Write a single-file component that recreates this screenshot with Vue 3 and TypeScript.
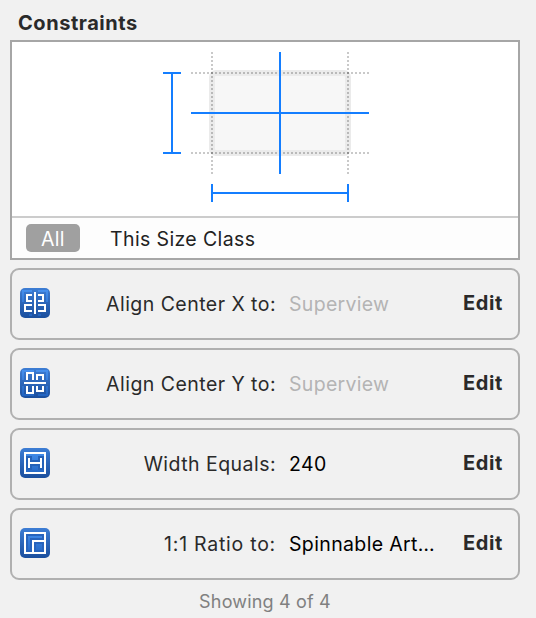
<script setup lang="ts">
interface Constraint {
  kind: 'centerX' | 'centerY' | 'width' | 'ratio'
  label: string
  value: string
  placeholder: boolean
}

const constraints: Constraint[] = [
  { kind: 'centerX', label: 'Align Center X to:', value: 'Superview', placeholder: true },
  { kind: 'centerY', label: 'Align Center Y to:', value: 'Superview', placeholder: true },
  { kind: 'width', label: 'Width Equals:', value: '240', placeholder: false },
  { kind: 'ratio', label: '1:1 Ratio to:', value: 'Spinnable Art…', placeholder: false },
]
</script>

<template>
  <main class="inspector">
    <h1 class="title">Constraints</h1>
    <section class="overview">
      <svg class="diagram" viewBox="12 42 506 174" width="506" height="174" shape-rendering="crispEdges">
        <rect x="212" y="73" width="136" height="80" rx="2" fill="#f7f7f7" />
        <rect x="212" y="73" width="136" height="80" rx="4" fill="none" stroke="#ebebeb" stroke-width="6" shape-rendering="auto" />
        <g stroke="#000" stroke-opacity=".21" stroke-width="2" stroke-dasharray="2 2">
          <path d="M191 73H369" /><path d="M191 153H369" />
          <path d="M212 52V174" /><path d="M348 52V174" />
        </g>
        <path d="M280 52V174M191 113H369M163 73H181M163 153H181M172 73V153M212 184V202M348 184V202M212 193H348" fill="none" stroke="#147eff" stroke-width="2" />
      </svg>
      <div class="scope">
        <button class="all">All</button>
        <span class="size-class">This Size Class</span>
      </div>
    </section>
    <ul class="list">
      <li v-for="c in constraints" :key="c.kind" class="card">
        <svg class="icon" viewBox="0 0 30 30" width="30" height="30">
          <defs>
            <linearGradient :id="'edge-' + c.kind" x1="0" y1="0" x2="0" y2="1">
              <stop offset="0" stop-color="#3d7dd4" />
              <stop offset="1" stop-color="#1b4f9e" />
            </linearGradient>
            <linearGradient :id="'face-' + c.kind" gradientUnits="userSpaceOnUse" x1="0" y1="2" x2="0" y2="28">
              <stop offset="0" stop-color="#4690ee" />
              <stop offset="1" stop-color="#2163c0" />
            </linearGradient>
          </defs>
          <rect width="30" height="30" rx="5" :fill="`url(#edge-${c.kind})`" />
          <g fill="none" stroke="#fff" stroke-width="2">
            <template v-if="c.kind === 'centerX'">
              <path d="M3 14V3H12M18 3H27V14M9 27H12M18 27H21" :stroke="`url(#face-${c.kind})`" />
              <path d="M15 4V26M12 7H7V13H12M18 7H23V13H18M12 17H5V23H12M18 17H25V23H18" />
            </template>
            <template v-else-if="c.kind === 'centerY'">
              <path d="M3 12V3H14M16 3H27V12M3 18V27H14M18 27H27V18" :stroke="`url(#face-${c.kind})`" />
              <path d="M4 15H26M7 12V5H13V12M17 12V7H23V12M7 18V25H13V18M17 18V23H23V18" />
            </template>
            <template v-else-if="c.kind === 'width'">
              <rect x="6" y="6" width="18" height="18" :fill="`url(#face-${c.kind})`" stroke="none" />
              <path d="M9 8V22M21 8V22M9 15H21" stroke="#2562b9" stroke-width="6" />
              <rect x="5" y="5" width="20" height="20" />
              <path d="M9 10V20M21 10V20M9 15H21" />
            </template>
            <template v-else>
              <rect x="6" y="6" width="18" height="18" fill="#2864bd" stroke="none" />
              <path d="M9 22V9H22" :stroke="`url(#face-${c.kind})`" />
              <rect x="5" y="5" width="20" height="20" />
              <path d="M13 24V13H24" />
              <rect x="16" y="16" width="6" height="6" :fill="`url(#face-${c.kind})`" stroke="none" />
            </template>
          </g>
        </svg>
        <span class="label" :class="c.kind">{{ c.label }}</span>
        <span class="value" :class="{ placeholder: c.placeholder }">{{ c.value }}</span>
        <button class="edit">Edit</button>
      </li>
    </ul>
    <footer class="footer">Showing 4 of 4</footer>
  </main>
</template>

<style>
body { margin: 0; background: #f1f1f1; }
</style>

<style scoped>
.inspector {
  box-sizing: border-box;
  width: 536px;
  height: 618px;
  padding: 0 16px 0 10px;
  background: #f1f1f1;
  font-family: Inter, "Noto Sans", sans-serif;
  font-size: 19.5px;
  line-height: 24px;
  color: #2a2a2a;
  overflow: hidden;
  white-space: nowrap;
}
button { border: 0; padding: 0; background: none; font: inherit; color: inherit; }
.title { margin: 0; height: 40px; padding: 11px 0 0 8px; box-sizing: border-box; font-size: 20px; font-weight: 700; letter-spacing: .55px; }
.overview { box-sizing: border-box; height: 220px; border: 2px solid #a6a6a6; background: #fff; }
.diagram { display: block; }
.scope { display: flex; align-items: center; height: 40px; border-top: 2px solid #ccc; background: #fdfdfd; padding-left: 14px; }
.all { width: 54px; height: 28px; border-radius: 5px; background: #a0a0a0; color: #fff; line-height: 30px; letter-spacing: .3px; }
.size-class { margin: 2px 0 0 30px; color: #222; letter-spacing: .38px; }
.list { display: grid; gap: 8px; margin: 8px 0 0; padding: 0; list-style: none; }
.card { box-sizing: border-box; display: flex; align-items: center; width: 510px; height: 72px; border: 2px solid #b0b0b0; border-radius: 9px; padding: 0 15px 0 8px; }
.icon { display: block; margin-top: -2px; }
.label { width: 226px; text-align: right; letter-spacing: .46px; }
.ratio { letter-spacing: .75px; }
.value { flex: 1; margin-left: 13px; color: #000; letter-spacing: .36px; }
.placeholder { color: #b4b4b4; letter-spacing: .3px; }
.edit { font-weight: 700; font-size: 20px; margin-top: -2px; letter-spacing: .65px; }
.footer { margin-top: 10px; text-align: center; color: #808080; font-size: 18px; letter-spacing: .18px; }
</style>
